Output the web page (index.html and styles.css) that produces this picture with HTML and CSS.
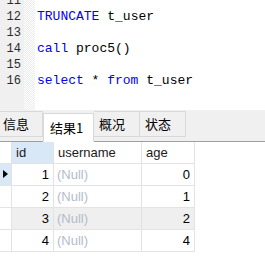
FILE: index.html
```html
<!DOCTYPE html>
<html lang="en">
<head>
  <meta charset="UTF-8">
  <title>Query</title>
  <link rel="stylesheet" href="styles.css">
</head>
<body>
  <div class="editor">
    <div class="gutter">
      <div class="ln">11</div>
      <div class="ln">12</div>
      <div class="ln">13</div>
      <div class="ln">14</div>
      <div class="ln">15</div>
      <div class="ln">16</div>
    </div>
    <div class="fold"></div>
    <div class="code">
      <div class="line">&nbsp;</div>
      <div class="line"><span class="kw">TRUNCATE</span> t_user</div>
      <div class="line">&nbsp;</div>
      <div class="line"><span class="kw">call</span> proc5()</div>
      <div class="line">&nbsp;</div>
      <div class="line"><span class="kw">select</span> * <span class="kw">from</span> t_user</div>
    </div>
  </div>

  <div class="tabbar">
    <div class="tab first">信息</div>
    <div class="tab active">结果1</div>
    <div class="tab">概况</div>
    <div class="tab">状态</div>
  </div>

  <div class="grid">
    <div class="cell ind"></div>
    <div class="cell head sel">id</div>
    <div class="cell head">username</div>
    <div class="cell head">age</div>

    <div class="cell ind cur"><span class="arrow"></span></div>
    <div class="cell num">1</div>
    <div class="cell null">(Null)</div>
    <div class="cell num">0</div>

    <div class="cell ind"></div>
    <div class="cell num">2</div>
    <div class="cell null">(Null)</div>
    <div class="cell num">1</div>

    <div class="cell ind"></div>
    <div class="cell num hl">3</div>
    <div class="cell null hl">(Null)</div>
    <div class="cell num hl">2</div>

    <div class="cell ind"></div>
    <div class="cell num">4</div>
    <div class="cell null">(Null)</div>
    <div class="cell num">4</div>
  </div>
</body>
</html>
```

FILE: styles.css
```css
body {
  margin: 0;
  background-color: #ffffff;
  font-family: "Liberation Sans", "Noto Sans CJK SC", sans-serif;
  font-size: 13px;
  color: #000000;
}

.editor {
  display: flex;
  height: 110px;
  overflow: hidden;
}

.gutter {
  width: 24px;
  background-color: #f0f0f0;
  margin-top: -7px;
}

.ln {
  height: 16px;
  line-height: 16px;
  text-align: right;
  padding-right: 3px;
  font-family: "Liberation Mono", monospace;
  font-size: 12px;
  color: #2b2b2b;
}

.fold {
  width: 11px;
  background-color: #ffffff;
  background-image: repeating-conic-gradient(#ececec 0 25%, #ffffff 0 50%);
  background-size: 2px 2px;
}

.code {
  margin-top: -7px;
  padding-left: 2px;
  font-family: "Liberation Mono", monospace;
  font-size: 13px;
}

.line {
  height: 16px;
  line-height: 16px;
  white-space: pre;
}

.kw {
  color: #0000ff;
}

.tabbar {
  display: flex;
  align-items: flex-end;
  height: 31px;
  background-color: #f0f0f0;
  border-bottom: 1px solid #a0a0a0;
}

.tab {
  box-sizing: border-box;
  flex: none;
  width: 46px;
  height: 26px;
  line-height: 24px;
  padding-left: 5px;
  margin-bottom: 4px;
  border: 1px solid #d9d9d9;
  border-left: none;
  font-family: "Noto Sans CJK SC", sans-serif;
  font-size: 13px;
  color: #000000;
  overflow: hidden;
  white-space: nowrap;
}

.tab.first {
  width: 43px;
  padding-left: 3px;
}

.tab.active {
  width: 51px;
  height: 29px;
  line-height: 27px;
  margin-bottom: -1px;
  padding-left: 6px;
  background-color: #ffffff;
  border: 1px solid #d9d9d9;
  border-bottom-color: #ffffff;
}

.grid {
  display: grid;
  grid-template-columns: 11px 41px 87px 52px;
  grid-auto-rows: 21px;
  gap: 1px;
  width: fit-content;
  padding: 0 1px 1px 0;
  background-color: #e3e3e3;
}

.cell {
  background-color: #ffffff;
  line-height: 21px;
  padding: 0 4px;
  white-space: nowrap;
  overflow: hidden;
}

.head {
  color: #1a1a1a;
}

.sel,
.cur {
  background-color: #d9e8f7;
}

.ind {
  padding: 0;
  position: relative;
}

.arrow {
  position: absolute;
  left: 3px;
  top: 6px;
  width: 0;
  height: 0;
  border-top: 4px solid transparent;
  border-bottom: 4px solid transparent;
  border-left: 5px solid #000000;
}

.num {
  text-align: right;
  padding-right: 4px;
}

.null {
  color: #b3bccb;
  padding-left: 3px;
}

.hl {
  background-color: #efefef;
}
```
